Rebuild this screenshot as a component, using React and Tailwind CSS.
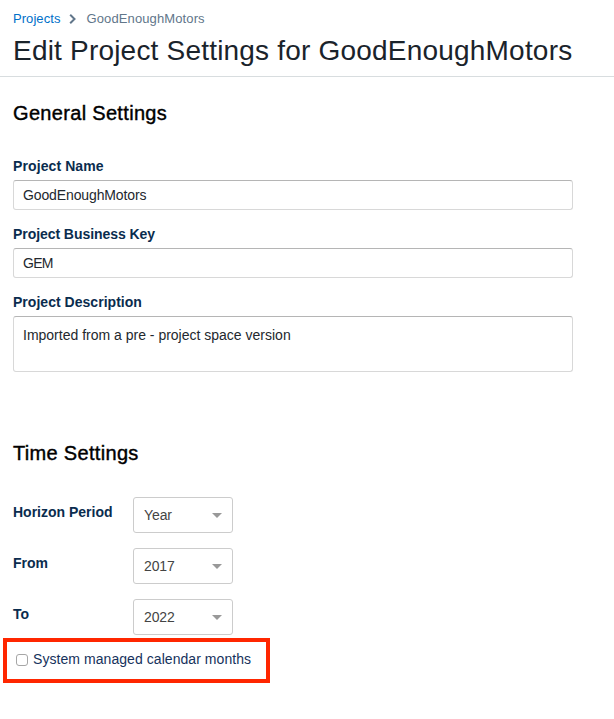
import { useState } from "react";

const fieldBorder =
  "block w-full rounded-[3px] border border-[#d8d8d8] border-t-[#b5b5b5] bg-white px-[9px] text-[14px] text-[#23282e] outline-none";

function Field({ label, labelClass = "", children }) {
  return (
    <label className="block">
      <span className={`block h-7 text-[14px] leading-7 font-bold text-[#0a2c4e] ${labelClass}`}>{label}</span>
      {children}
    </label>
  );
}

function SelectRow({ label, value }) {
  return (
    <div className="flex h-9">
      <span className="w-[120px] text-[14px] leading-[30px] font-bold text-[#0a2c4e]">{label}</span>
      <button
        type="button"
        className="flex w-[100px] items-center justify-between rounded-[3px] border border-[#cccccc] bg-white pr-[10px] pl-[10px] text-[14px] tracking-[-0.1px] text-[#444444]"
      >
        {value}
        <svg width="10" height="5" viewBox="0 0 10 5" fill="#999999">
          <path d="M0 0h10L5 5z" />
        </svg>
      </button>
    </div>
  );
}

function SectionTitle({ children }) {
  return (
    <h2 className="text-[20px] leading-6 tracking-[0.32px] text-black [-webkit-text-stroke:0.4px_black]">{children}</h2>
  );
}

export default function App() {
  const [checked, setChecked] = useState(false);
  return (
    <div className="h-[719px] w-[614px] overflow-hidden bg-white font-['Liberation_Sans',Arial,sans-serif]">
      <header className="h-[77px] border-b border-[#d8dddf] px-[13px] pt-[11px]">
        <nav className="flex h-4 items-center text-[13px] leading-4">
          <a className="tracking-[0.06px] text-[#0070c9]">Projects</a>
          <svg className="mx-[8px]" width="10" height="12" viewBox="0 0 10 12" fill="none" stroke="#61768a" strokeWidth="2">
            <path d="M2.2 1.8 6.5 6 2.2 10.2" />
          </svg>
          <span className="tracking-[0.12px] text-[#61768a]">GoodEnoughMotors</span>
        </nav>
        <h1 className="mt-2 text-[28px] leading-8 tracking-[0.2px] whitespace-nowrap text-[#1a232b]">
          Edit Project Settings for GoodEnoughMotors
        </h1>
      </header>
      <main className="px-[13px] pt-6">
        <SectionTitle>General Settings</SectionTitle>
        <div className="mt-[27px] flex w-[560px] flex-col gap-[10px]">
          <Field label="Project Name" labelClass="tracking-[0.1px]">
            <input className={`${fieldBorder} h-[30px] tracking-[-0.12px]`} defaultValue="GoodEnoughMotors" />
          </Field>
          <Field label="Project Business Key" labelClass="tracking-[-0.06px]">
            <input className={`${fieldBorder} h-[30px] tracking-[-0.7px]`} defaultValue="GEM" />
          </Field>
          <Field label="Project Description" labelClass="tracking-[0.03px]">
            <textarea
              className={`${fieldBorder} h-14 resize-none pt-2 leading-5`}
              defaultValue="Imported from a pre - project space version"
            />
          </Field>
        </div>
        <div className="mt-[69px]">
          <SectionTitle>Time Settings</SectionTitle>
        </div>
        <div className="mt-8 flex flex-col gap-[15px]">
          <SelectRow label="Horizon Period" value="Year" />
          <SelectRow label="From" value="2017" />
          <SelectRow label="To" value="2022" />
        </div>
        <label className="mt-[3px] -ml-[10px] flex h-[45px] w-[267px] items-start border-4 border-[#ff2600] pt-[7px] pl-[9px] text-[14px] leading-5 tracking-[0.06px] whitespace-nowrap text-[#16325c]">
          <input
            type="checkbox"
            checked={checked}
            onChange={() => setChecked(!checked)}
            className="mt-[5px] mr-[5px] h-3 w-3 shrink-0 appearance-none rounded-[3px] border border-[#a6a6a6] bg-white checked:bg-[#0070c9]"
          />
          System managed calendar months
        </label>
      </main>
    </div>
  );
}
